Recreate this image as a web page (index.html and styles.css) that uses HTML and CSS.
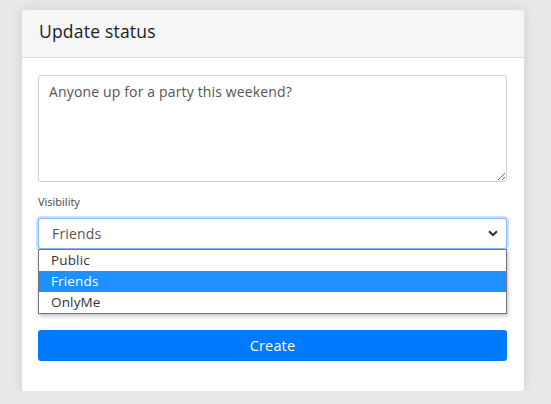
FILE: index.html
```html
<!DOCTYPE html>
<html lang="en">
<head>
<meta charset="utf-8">
<title>Update status</title>
<link rel="stylesheet" href="styles.css">
</head>
<body>
<div class="card">
  <div class="card-header">Update status</div>
  <div class="card-body">
    <textarea class="status-input">Anyone up for a party this weekend?</textarea>
    <label class="field-label">Visibility</label>
    <div class="select-wrap">
      <div class="select">
        <span>Friends</span>
        <svg class="chevron" width="10" height="7" viewBox="0 0 10 7"><path d="M1 1.2 L5 5 L9 1.2" fill="none" stroke="#333" stroke-width="2"/></svg>
      </div>
      <ul class="listbox">
        <li class="option">Public</li>
        <li class="option selected">Friends</li>
        <li class="option">OnlyMe</li>
      </ul>
    </div>
    <button class="btn-create">Create</button>
  </div>
</div>
</body>
</html>
```
FILE: styles.css
```css
html, body {
  margin: 0;
  padding: 0;
}
body {
  background: #e9e9e9;
  font-family: "Open Sans", "Liberation Sans", sans-serif;
  padding-top: 10px;
  padding-left: 22px;
}
.card {
  width: 502px;
  height: 381px;
  box-sizing: border-box;
  background: #fff;
  border-radius: 2px;
  box-shadow: 0 0 14px rgba(0,0,0,0.12);
}
.card-header {
  height: 48px;
  box-sizing: border-box;
  background: #f6f6f6;
  border-bottom: 1px solid #dcdcdc;
  border-radius: 2px 2px 0 0;
  padding: 9px 17px 0;
  font-size: 17.5px;
  font-weight: 500;
  letter-spacing: 0.2px;
  color: #1b1b2a;
  line-height: 24px;
}
.card-body {
  padding: 17px 17px 0 16px;
  display: flex;
  flex-direction: column;
}
.status-input {
  display: block;
  width: 469px;
  height: 107px;
  box-sizing: border-box;
  border: 1px solid #cfcfd4;
  border-radius: 3px;
  padding: 6px 10px;
  font-family: inherit;
  font-size: 14px;
  letter-spacing: 0.15px;
  line-height: 20px;
  color: #555;
  resize: vertical;
  margin: 0;
}
.field-label {
  margin-top: 12px;
  font-size: 11px;
  color: #444;
  line-height: 16px;
}
.select-wrap {
  position: relative;
  margin-top: 8px;
}
.select {
  width: 469px;
  height: 31px;
  box-sizing: border-box;
  border: 1px solid #86b7fe;
  border-radius: 3px;
  box-shadow: 0 0 0 2px rgba(13,110,253,0.22);
  display: flex;
  align-items: center;
  justify-content: space-between;
  padding: 0 8px 0 13px;
  font-size: 14px;
  letter-spacing: 0.15px;
  color: #555;
  background: #fff;
}
.chevron {
  display: block;
}
.listbox {
  position: absolute;
  left: 0;
  top: 31px;
  width: 469px;
  box-sizing: border-box;
  margin: 0;
  padding: 0;
  list-style: none;
  background: #fff;
  border: 1px solid #767676;
  box-shadow: 1px 2px 4px rgba(0,0,0,0.25);
  z-index: 2;
}
.option {
  height: 21px;
  line-height: 21px;
  padding-left: 12px;
  font-size: 13.5px;
  letter-spacing: 0.15px;
  color: #333;
}
.option.selected {
  background: #1e90ff;
  color: #fff;
}
.btn-create {
  margin-top: 81px;
  width: 469px;
  height: 31px;
  border: none;
  border-radius: 3px;
  background: #007bff;
  color: #fff;
  font-family: inherit;
  font-size: 14.5px;
  letter-spacing: 0.15px;
  padding: 0;
}
```
